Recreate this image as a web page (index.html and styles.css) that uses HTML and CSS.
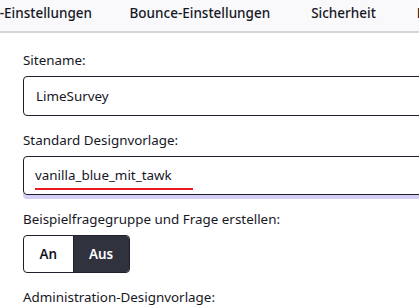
FILE: index.html
```html
<!DOCTYPE html>
<html lang="de">
<head>
<meta charset="utf-8">
<link rel="stylesheet" href="styles.css">
</head>
<body>
<nav class="tabs">
  <div class="tab-strip">
    <span class="tab">E-Mail-Einstellungen</span>
    <span class="tab">Bounce-Einstellungen</span>
    <span class="tab">Sicherheit</span>
    <span class="tab">Erweitert</span>
  </div>
</nav>
<main class="form">
  <div class="field">
    <label class="label">Sitename:</label>
    <div class="input">LimeSurvey</div>
  </div>
  <div class="field">
    <label class="label">Standard Designvorlage:</label>
    <div class="input input-focus"><span class="misspelled">vanilla_blue_mit_tawk</span></div>
  </div>
  <div class="field">
    <label class="label">Beispielfragegruppe und Frage erstellen:</label>
    <div class="toggle">
      <span class="toggle-btn">An</span>
      <span class="toggle-btn active">Aus</span>
    </div>
  </div>
  <div class="field">
    <label class="label">Administration-Designvorlage:</label>
  </div>
</main>
</body>
</html>
```
FILE: styles.css
```css
html, body {
  margin: 0;
  padding: 0;
  background: #ffffff;
  overflow: hidden;
}
body {
  font-family: "Noto Sans", "Open Sans", sans-serif;
  font-size: 13.4px;
  color: #16171f;
  width: 419px;
  height: 306px;
}
.tabs {
  background: #f9f9fb;
  border-bottom: 2px solid #d5d5db;
  height: 31px;
  overflow: hidden;
}
.tab-strip {
  display: flex;
  white-space: nowrap;
  margin-left: -60px;
}
.tab {
  padding: 0 20.5px;
  line-height: 27px;
  font-size: 13.5px;
  font-weight: 500;
}
.tab:first-child {
  padding-right: 17px;
}
.form {
  padding: 17px 0 0 23px;
  width: 520px;
}
.field {
  display: flex;
  flex-direction: column;
  align-items: flex-start;
  margin-bottom: 14px;
}
.label {
  line-height: 20px;
  margin-bottom: 6px;
  font-weight: 400;
}
.input {
  align-self: stretch;
  height: 40px;
  box-sizing: border-box;
  border: 1px solid #1e1f28;
  border-radius: 4px;
  padding: 0 12px;
  display: flex;
  align-items: center;
}
.input-focus {
  box-shadow: 0 4px 0 #d5cef7;
  height: 39px;
  align-items: flex-start;
  padding-top: 9px;
  padding-left: 10px;
}
.misspelled {
  display: inline-block;
  line-height: 18px;
  padding: 0 21px 4px 0;
  margin-left: 1px;
  border-bottom: 2px solid #ec1820;
}
.toggle {
  display: flex;
  height: 38px;
  box-sizing: border-box;
  border: 1px solid #1e1f28;
  border-radius: 4px;
  overflow: hidden;
}
.toggle-btn {
  display: flex;
  align-items: center;
  justify-content: center;
  padding: 0 15.5px;
  font-weight: 600;
}
.toggle-btn + .toggle-btn {
  border-left: 1px solid #1e1f28;
}
.toggle-btn.active {
  background: #30323e;
  color: #ffffff;
}
```
